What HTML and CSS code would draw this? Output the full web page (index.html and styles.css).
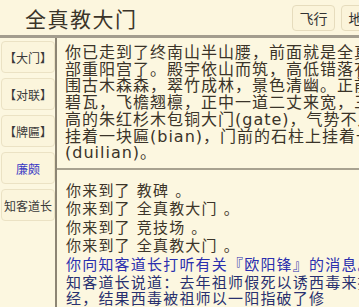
FILE: index.html
```html
<!DOCTYPE html>
<html lang="zh">
<head>
  <meta charset="UTF-8" />
  <meta name="viewport" content="width=device-width, initial-scale=1.0"/>
  <title>全真教大门</title>
  <link rel="stylesheet" href="styles.css">
</head>
<body>
  <div class="app">
    <header class="topbar">
      <h1 class="room-title">全真教大门</h1>
      <div class="actions">
        <button class="act-btn">飞行</button>
        <button class="act-btn">地图</button>
      </div>
    </header>

    <div class="body">
      <nav class="side">
        <button class="side-btn">【大门】</button>
        <button class="side-btn">【对联】</button>
        <button class="side-btn">【牌匾】</button>
        <button class="side-btn npc">廉颇</button>
        <button class="side-btn">知客道长</button>
      </nav>

      <main class="main">
        <div class="desc">你已走到了终南山半山腰，前面就是全真教的总<br>部重阳宫了。殿宇依山而筑，高低错落有致。周<br>围古木森森，翠竹成林，景色清幽。正前方黄墙<br>碧瓦，飞檐翘檩，正中一道二丈来宽，三丈来<br>高的朱红杉木包铜大门(gate)，气势不凡。门上<br>挂着一块匾(bian)，门前的石柱上挂着一副对联<br>(duilian)。</div>

        <div class="log">
          <p class="msg">你来到了 教碑 。</p>
          <p class="msg">你来到了 全真教大门 。</p>
          <p class="msg">你来到了 竞技场 。</p>
          <p class="msg">你来到了 全真教大门 。</p>
          <p class="msg ask">你向知客道长打听有关『欧阳锋』的消息。</p>
          <p class="msg say">知客道长说道：去年祖师假死以诱西毒来抢真<br>经，结果西毒被祖师以一阳指破了修</p>
        </div>
      </main>
    </div>
  </div>
</body>
</html>
```

FILE: styles.css
```css
html, body {
  margin: 0;
  padding: 0;
  background: #fcf7e0;
  color: #3a3328;
  font-family: "DejaVu Sans", "Noto Sans CJK SC", sans-serif;
  overflow: hidden;
}

.app {
  width: 400px;
  height: 307px;
  display: flex;
  flex-direction: column;
}

.topbar {
  height: 35px;
  display: flex;
  align-items: center;
  padding: 0 16px 0 25px;
  border-bottom: 3px solid #a39d8e;
  background: #fcf6de;
}

.room-title {
  margin: 0;
  font-size: 21px;
  font-weight: normal;
  color: #3b3429;
  letter-spacing: 1.5px;
}

.actions {
  margin-left: auto;
  display: flex;
  gap: 6px;
}

.act-btn {
  width: 43px;
  height: 26px;
  padding: 0;
  background: #fbf4da;
  border: 1px solid #e6dcbd;
  border-radius: 4px;
  font-family: inherit;
  font-size: 14px;
  color: #333;
}

.body {
  flex: 1;
  display: flex;
  min-height: 0;
}

.side {
  width: 59px;
  padding: 3px 0 0 1px;
  box-sizing: border-box;
  display: flex;
  flex-direction: column;
  gap: 5px;
  border-right: 2px solid #8c8574;
}

.side-btn {
  width: 54px;
  height: 32px;
  padding: 0;
  background: #fbf5dc;
  border: 1px solid #ebe2c4;
  border-radius: 4px;
  font-family: inherit;
  font-size: 12px;
  color: #3a3a3a;
}

.side-btn.npc {
  color: #3838c4;
}

.main {
  flex: 1;
  display: flex;
  flex-direction: column;
}

.desc {
  padding: 7px 0 6px 8px;
  font-size: 16px;
  letter-spacing: 1px;
  line-height: 16.7px;
  white-space: nowrap;
  color: #3a3328;
  border-bottom: 2px solid #a8a290;
}

.log {
  padding: 13px 0 0 9px;
  white-space: nowrap;
}

.msg {
  margin: 0 0 2.5px;
  font-size: 15px;
  letter-spacing: 1.2px;
  line-height: 16px;
  color: #3c3529;
}

.msg.ask {
  color: #2b2fae;
}

.msg.say {
  color: #28306f;
}
```
